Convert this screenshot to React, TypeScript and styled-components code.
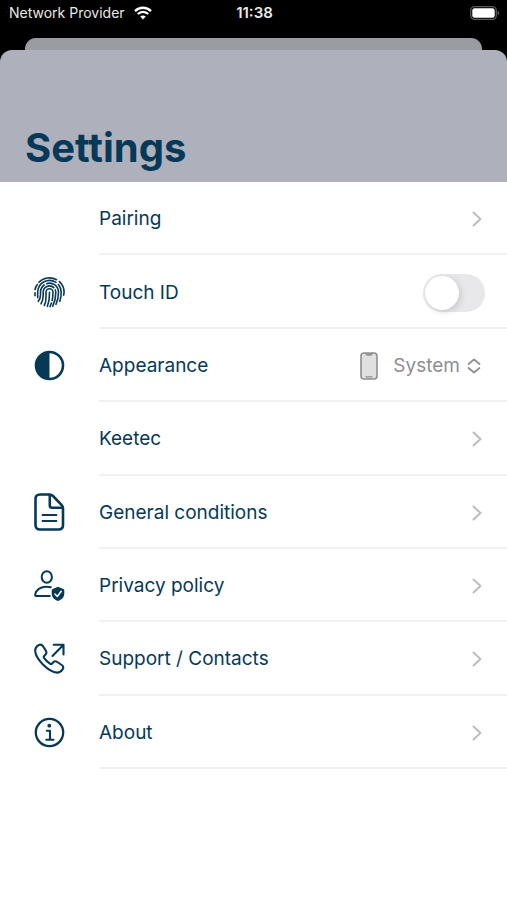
import React, { useId, useState } from "react";
import styled, { createGlobalStyle } from "styled-components";

const navy = "#063957";

const GlobalStyle = createGlobalStyle`
  *, *::before, *::after { box-sizing: border-box; }
  body {
    margin: 0;
    background: #fff;
    font-family: Inter, "Liberation Sans", sans-serif;
    color: ${navy};
  }
`;

const Page = styled.div`
  min-height: 100vh;
  display: flex;
  flex-direction: column;
  background: #fff;
`;

const Backdrop = styled.div`
  background: #000;
`;

const StatusBar = styled.div`
  height: 38px;
  padding: 0 7px 12px 9px;
  display: grid;
  grid-template-columns: 1fr auto 1fr;
  align-items: center;
  color: #e8e8e8;
  font-size: 14px;
  line-height: 20px;
`;

const Carrier = styled.div`
  display: flex;
  align-items: center;
  gap: 9px;
  white-space: nowrap;
`;

const Clock = styled.time`
  font-size: 15px;
  font-weight: 600;
`;

const BatterySlot = styled.div`
  display: flex;
  justify-content: flex-end;
`;

const SheetBehind = styled.div`
  height: 12px;
  margin: 0 25px;
  border-radius: 11px 11px 0 0;
  background: #9b9ba2;
`;

const Header = styled.header`
  height: 132px;
  padding: 0 25px 8px;
  display: flex;
  align-items: flex-end;
  border-radius: 12px 12px 0 0;
  background: #aeb0bc;
`;

const Title = styled.h1`
  margin: 0;
  font-size: 40px;
  line-height: 52px;
  font-weight: 700;
`;

const List = styled.ul`
  list-style: none;
  margin: 0;
  padding: 0;
  display: grid;
  grid-auto-rows: 1fr;
  min-height: 587px;
`;

const Item = styled.li`
  display: flex;
`;

const RowBase = styled.div`
  flex: 1;
  display: flex;
  align-items: stretch;
  font: inherit;
  color: inherit;
`;

const RowLink = styled(RowBase).attrs({ as: "a" })<{ href: string }>`
  text-decoration: none;
`;

const IconSlot = styled.span`
  width: 99px;
  flex: none;
  display: flex;
  align-items: center;
  padding-left: 34px;
`;

const RowBody = styled.span`
  flex: 1;
  display: flex;
  align-items: center;
  justify-content: space-between;
  padding: 3px 22px 0 0;
  border-bottom: 2px solid #f1f1f2;
`;

const labelText = `
  font-size: 19px;
  line-height: 24px;
`;

const Label = styled.span`
  ${labelText}
`;

const FieldLabel = styled.label`
  ${labelText}
`;

const Toggle = styled.input`
  appearance: none;
  width: 62px;
  height: 38px;
  margin: 0;
  padding: 2px;
  border-radius: 19px;
  background: #e8e8ea;
  display: flex;
  cursor: pointer;

  &::before {
    content: "";
    width: 34px;
    height: 34px;
    border-radius: 50%;
    background: #fff;
    box-shadow: 2px 2px 6px rgba(0, 0, 0, 0.14);
  }
  &:checked {
    background: ${navy};
    justify-content: flex-end;
  }
`;

const Picker = styled.span`
  display: flex;
  align-items: center;
  color: #8e8e92;
  padding-right: 4px;
`;

const Select = styled.select`
  appearance: none;
  field-sizing: content;
  border: 0;
  margin: 0 7px 0 15px;
  padding: 0;
  background: transparent;
  color: inherit;
  font-family: inherit;
  ${labelText}
`;

const ChevronSlot = styled.span`
  display: flex;
  padding-right: 3px;
`;

const stroke = {
  fill: "none",
  stroke: "currentColor",
  strokeLinecap: "round",
  strokeLinejoin: "round",
} as const;

const WifiIcon = () => (
  <svg width="18" height="14" viewBox="0 0 18 14" fill="none" stroke="#fff" strokeWidth="2.3" aria-hidden="true">
    <path d="M1 5.1C5.5 .6 12.500.6 17 5.100" />
    <path d="M3.800 8C6.700 5.100 11.300 5.100 14.200 8" />
    <path d="M9 13.600 6.200 10.600Q9 8.200 11.800 10.600Z" fill="#fff" stroke="none" />
  </svg>
);

const BatteryIcon = () => (
  <svg width="30" height="14" viewBox="0 0 30 14" aria-hidden="true">
    <rect x="0.700" y="0.700" width="25.600" height="12.600" rx="3.800" fill="none" stroke="#59595b" strokeWidth="1.300" />
    <rect x="2.300" y="2.300" width="22.400" height="9.400" rx="2.300" fill="#fff" />
    <path d="M27.700 4.700Q29.300 5.500 29.300 7T27.700 9.300Z" fill="#59595b" />
  </svg>
);

const ChevronIcon = () => (
  <svg width="10" height="16" viewBox="0 0 10 16" {...stroke} stroke="#bdbdc0" strokeWidth="2" aria-hidden="true">
    <path d="m1.500 1.500 7 6.500-7 6.500" />
  </svg>
);

const UpDownIcon = () => (
  <svg width="14" height="16" viewBox="0 0 14 16" {...stroke} strokeWidth="1.700" aria-hidden="true">
    <path d="m1.500 6 5.500-4.500L12.500 6M1.500 10l5.500 4.500L12.500 10" />
  </svg>
);

const PhoneDeviceIcon = () => (
  <svg width="18" height="28" viewBox="0 0 18 28" {...stroke} strokeWidth="1.600" aria-hidden="true">
    <rect x="1" y="1" width="16" height="26" rx="3" fill="#e0e0e1" />
    <path d="M6 1.500Q6.300 2.900 7.500 2.900h3Q11.700 2.900 12 1.500" fill="currentColor" />
    <path d="M6 24.800h6" strokeWidth="1.300" />
  </svg>
);

const FingerprintIcon = () => (
  <svg width="31" height="31" viewBox="0 0 31 31" {...stroke} strokeWidth="1.600" aria-hidden="true">
    <path d="M5 5.300A14.500 14.500 0 0 1 22.500 2.700" />
    <path d="M25.400 4.600A14.500 14.500 0 0 1 29.700 18.200" />
    <path d="M3.300 7.500A14.500 14.500 0 0 0 1 12.500" />
    <path d="M1 15.800v3" />
    <path d="M3.700 20.800V15A11.800 11.800 0 0 1 22 5.400" />
    <path d="M24.400 7.600A11.800 11.800 0 0 1 27.200 15.300C27.200 18.700 26.700 21.300 25.800 24.200" />
    <path d="M4.300 24.300Q6.500 21.400 6.500 18V15.300A9 9 0 0 1 10.200 8" />
    <path d="M12.600 6.700A9 9 0 0 1 24.500 15.300C24.500 20 23.600 23.700 22 27.300" />
    <path d="M7 26.800Q9.200 22.900 9.200 18.200V15.300A6.300 6.300 0 0 1 19.800 10.700" />
    <path d="M21.200 12.900Q21.800 14 21.800 15.600C21.800 20.700 20.800 25 18.800 29.200" />
    <path d="M10.300 28.500Q12 25.300 12 20V15.300A3.500 3.500 0 0 1 19 15.300C19 18.500 18.700 21 18.200 23.500" />
    <path d="M17.500 26 16 29.600" />
    <path d="M15.500 15.400C15.600 20.400 15 25 13.400 29.300" />
  </svg>
);

const AppearanceIcon = () => (
  <svg width="31" height="31" viewBox="0 0 31 31" aria-hidden="true">
    <circle cx="15.500" cy="15.500" r="13.500" fill="none" stroke="currentColor" strokeWidth="2.600" />
    <path d="M15.500 2a13.500 13.500 0 0 0 0 27Z" fill="currentColor" />
  </svg>
);

const DocumentIcon = () => (
  <svg width="31" height="38" viewBox="0 0 31 38" {...stroke} strokeWidth="2.600" aria-hidden="true">
    <path d="M6 1.500H15.500Q17.500 1.500 19 3L27.500 11.800Q29 13.300 29 15.300V32Q29 36.500 24.500 36.500H6Q1.500 36.500 1.500 32V6Q1.500 1.500 6 1.500Z" />
    <path d="M15.800 2V12.500Q15.800 14.800 18 14.800H28.500" />
    <path d="M8.500 22h14M8.500 28h14" strokeWidth="1.800" />
  </svg>
);

const PrivacyIcon = () => (
  <svg width="31" height="31" viewBox="0 0 31 31" {...stroke} strokeWidth="2" aria-hidden="true">
    <ellipse cx="12.800" cy="7" rx="5.100" ry="5.800" />
    <path d="M15.800 26H2Q1 26 1.200 24.500C1.800 20 6.500 16.700 12.500 16.700Q15 16.700 16.800 17.300" />
    <path d="M24 16.800 29.300 19Q30.300 19.400 30.300 20.500V23.500C30.300 27.300 27.800 29.700 24 31C20.200 29.700 17.700 27.300 17.700 23.500V20.500Q17.700 19.400 18.700 19Z" fill="currentColor" stroke="none" />
    <path d="m21 24 2.300 2.500 3.900-5.200" stroke="#fff" strokeWidth="1.500" />
  </svg>
);

const SupportIcon = () => (
  <svg width="31" height="31" viewBox="0 0 31 31" {...stroke} strokeWidth="2.100" aria-hidden="true">
    <path d="M9 3.200C7.800 1.500 6.200 1.100 4.500 2.200C2 3.800 1 5.700 1.200 8.200C1.600 12 4 16.500 8.700 21.200C14 26.500 19 29.500 23 29.600C25.400 29.700 27 28.500 28.600 26.300C29.700 24.700 29.300 23.200 27.700 22L23.300 19C21.800 18 20.500 18 19.300 19.200L18 20.600C17.300 21.200 16.700 21.200 16 20.700Q12.500 18.300 10 14.800C9.500 14 9.600 13.500 10.200 12.900L11.500 11.600C12.700 10.400 12.700 9.200 11.800 7.600Z" />
    <path d="M18.500 13 29.300 2M19.700 1.700H29.500V11.500" />
  </svg>
);

const InfoIcon = () => (
  <svg width="31" height="31" viewBox="0 0 31 31" {...stroke} aria-hidden="true">
    <circle cx="15.500" cy="15.500" r="13.700" strokeWidth="2.300" />
    <circle cx="15.300" cy="8.700" r="1.900" fill="currentColor" stroke="none" />
    <path d="M12.800 13.700h3.200v8.800M12.300 22.700h7.200" strokeWidth="2.100" />
  </svg>
);

const NavRow = ({ label, icon }: { label: string; icon?: React.ReactNode }) => (
  <Item>
    <RowLink href="#">
      <IconSlot>{icon}</IconSlot>
      <RowBody>
        <Label>{label}</Label>
        <ChevronSlot><ChevronIcon /></ChevronSlot>
      </RowBody>
    </RowLink>
  </Item>
);

export default function App() {
  const touchId = useId();
  const appearanceId = useId();
  const [touchEnabled, setTouchEnabled] = useState(false);
  const [appearance, setAppearance] = useState("System");

  return (
    <>
      <GlobalStyle />
      <Page>
        <Backdrop>
          <StatusBar>
            <Carrier>Network Provider <WifiIcon /></Carrier>
            <Clock>11:38</Clock>
            <BatterySlot><BatteryIcon /></BatterySlot>
          </StatusBar>
          <SheetBehind />
          <Header><Title>Settings</Title></Header>
        </Backdrop>
        <List>
          <NavRow label="Pairing" />
          <Item>
            <RowBase>
              <IconSlot><FingerprintIcon /></IconSlot>
              <RowBody>
                <FieldLabel htmlFor={touchId}>Touch ID</FieldLabel>
                <Toggle
                  id={touchId}
                  type="checkbox"
                  role="switch"
                  checked={touchEnabled}
                  onChange={(e) => setTouchEnabled(e.target.checked)}
                />
              </RowBody>
            </RowBase>
          </Item>
          <Item>
            <RowBase>
              <IconSlot><AppearanceIcon /></IconSlot>
              <RowBody>
                <FieldLabel htmlFor={appearanceId}>Appearance</FieldLabel>
                <Picker>
                  <PhoneDeviceIcon />
                  <Select
                    id={appearanceId}
                    value={appearance}
                    onChange={(e) => setAppearance(e.target.value)}
                  >
                    <option>System</option>
                    <option>Light</option>
                    <option>Dark</option>
                  </Select>
                  <UpDownIcon />
                </Picker>
              </RowBody>
            </RowBase>
          </Item>
          <NavRow label="Keetec" />
          <NavRow label="General conditions" icon={<DocumentIcon />} />
          <NavRow label="Privacy policy" icon={<PrivacyIcon />} />
          <NavRow label="Support / Contacts" icon={<SupportIcon />} />
          <NavRow label="About" icon={<InfoIcon />} />
        </List>
      </Page>
    </>
  );
}
